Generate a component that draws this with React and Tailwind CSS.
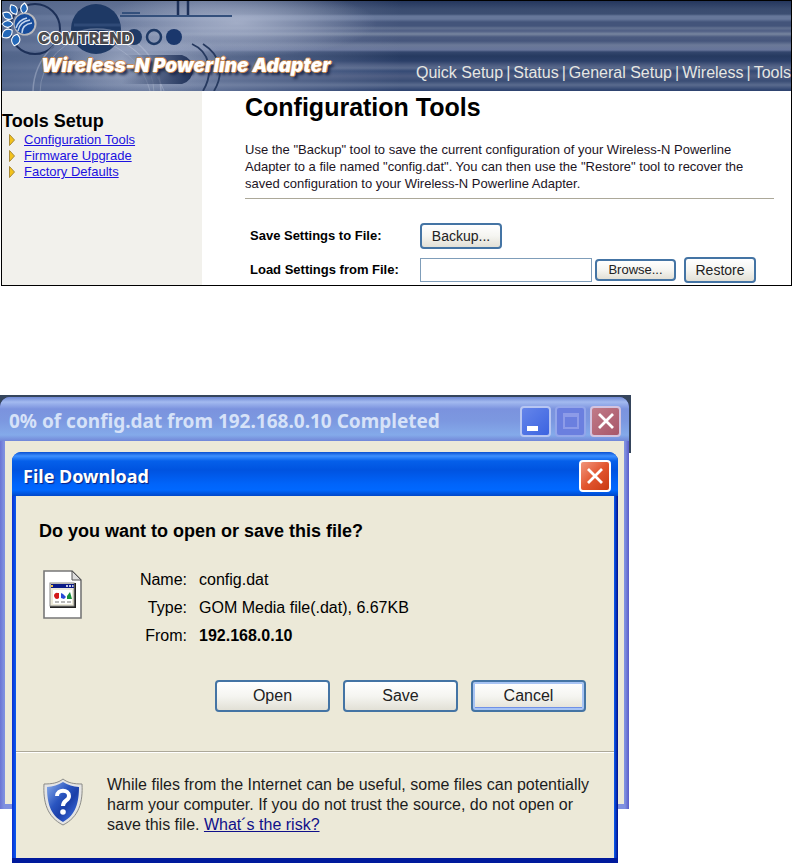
import React from 'react';

const navItems = ['Quick Setup', 'Status', 'General Setup', 'Wireless', 'Tools'];

const sideLinks = ['Configuration Tools', 'Firmware Upgrade', 'Factory Defaults'];

const fileDetails = [
  { label: 'Name:', value: 'config.dat' },
  { label: 'Type:', value: 'GOM Media file(.dat), 6.67KB' },
  { label: 'From:', value: '192.168.0.10', bold: true },
];

const xpButton =
  'rounded-[4px] border-2 border-[#4474a4] bg-linear-to-b from-white via-[#f5f5f1] to-[#e2e0d6] text-[#222]';

const BannerArt = () => (
  <svg className="absolute inset-y-0 left-0 h-[90px] w-[400px]" viewBox="0 0 400 90" aria-hidden="true">
    <defs>
      <linearGradient id="fade" x1="0" x2="1">
        <stop offset="0" stopColor="#5c6f94" stopOpacity="0.8" />
        <stop offset="0.5" stopColor="#8593b3" stopOpacity="0.6" />
        <stop offset="1" stopColor="#8794b4" stopOpacity="0" />
      </linearGradient>
      <linearGradient id="pill" x1="0" x2="1">
        <stop offset="0" stopColor="#1f3158" stopOpacity="0" />
        <stop offset="1" stopColor="#1f3158" />
      </linearGradient>
      <radialGradient id="glow">
        <stop offset="0" stopColor="#c4cce0" stopOpacity="0.65" />
        <stop offset="1" stopColor="#c4cce0" stopOpacity="0" />
      </radialGradient>
    </defs>
    <rect width="400" height="90" fill="url(#fade)" />
    <ellipse cx="235" cy="22" rx="140" ry="34" fill="url(#glow)" />
    <ellipse cx="135" cy="62" rx="90" ry="36" fill="url(#glow)" />
    <circle cx="33" cy="28" r="25" fill="none" stroke="#1d3058" strokeWidth="2" />
    <circle cx="94" cy="28" r="25" fill="#1e3965" />
    <path d="M72 24h46M73 33h43M77 42h34" stroke="#2f4a77" strokeWidth="3" />
    <path d="M118 15H230" stroke="#34507c" strokeWidth="2" />
    <path d="M120 12h18" stroke="#34507c" strokeWidth="2" />
    <path d="M176 0v14M186 0v14" stroke="#1d3058" strokeWidth="2.5" />
    <circle cx="95" cy="92" r="64" fill="none" stroke="#c0c9dc" strokeOpacity="0.4" strokeWidth="1.5" />
    <circle cx="95" cy="92" r="57" fill="none" stroke="#c0c9dc" strokeOpacity="0.3" />
    <path d="M100 40c28 10 42 28 48 50M110 36c32 14 44 34 52 54" fill="none" stroke="#c0c9dc" strokeOpacity="0.35" />
    <path d="M120 54h60a15 15 0 0 1 0 29h-60z" fill="url(#pill)" />
    <path d="M190 43c18 8 22 28 11 47M201 43c19 12 21 30 11 47" fill="none" stroke="#26395f" strokeWidth="1.8" />
    <circle cx="132" cy="36" r="8" fill="#1e3965" />
    <circle cx="152" cy="36" r="7" fill="none" stroke="#1e3965" strokeWidth="2.5" />
    <circle cx="172" cy="36" r="8" fill="#1a376c" />
  </svg>
);

const LogoMark = () => (
  <svg className="h-[42px] w-[36px] shrink-0 overflow-visible" viewBox="0 0 36 42" aria-hidden="true">
    <g fill="#2468b8" stroke="#fff" strokeWidth="1.1" strokeLinejoin="round">
      <path d="M0-6c5 4 4 8 0 11-4-3-5-7 0-11z" transform="translate(22 5) rotate(5)" />
      <path d="M0-6c5 4 4 8 0 11-4-3-5-7 0-11z" transform="translate(12 6) rotate(-30)" />
      <path d="M0-6c5 4 4 8 0 11-4-3-5-7 0-11z" transform="translate(6 12) rotate(-60)" />
      <path d="M0-6c5 4 4 8 0 11-4-3-5-7 0-11z" transform="translate(6 20) rotate(-90)" />
      <path d="M0-7c6 4 5 9 0 12-5-3-6-8 0-12z" transform="translate(6 29) rotate(-125)" />
      <path d="M0-7c6 4 5 9 0 12-5-3-6-8 0-12z" transform="translate(14 35) rotate(-165)" />
    </g>
    <circle cx="23" cy="20" r="11.500" fill="#b9b9bd" />
    <circle cx="22.500" cy="20" r="10" fill="#174c9b" />
    <path d="M14 24c2-6 6-9 11-10M16 27c1-6 5-10 12-11M20 29c0-5 3-9 10-10" fill="none" stroke="#c3d5ee" strokeWidth="1.500" />
  </svg>
);

const ArrowBullet = () => (
  <svg className="h-[12px] w-[6px]" viewBox="0 0 6 12" aria-hidden="true">
    <path d="M.5.5 5.5 6 .5 11.5z" fill="#f3c21a" stroke="#a88a38" />
  </svg>
);

const CrossIcon = () => (
  <svg className="size-5" viewBox="0 0 20 20" aria-hidden="true">
    <path d="M3 3 17 17M17 3 3 17" stroke="#fff" strokeWidth="2.8" />
  </svg>
);

const FileIcon = () => (
  <svg className="h-[49px] w-10" viewBox="0 0 40 49" aria-hidden="true">
    <path d="M1 1h28l9 9v38H1z" fill="#fff" stroke="#777" strokeWidth="1.6" />
    <path d="M29 1v9h9z" fill="#ddd" stroke="#555" />
    <rect x="7" y="13" width="26" height="25" fill="#222" />
    <rect x="7" y="13" width="24" height="23" fill="#ece9d8" stroke="#888" />
    <rect x="8" y="14" width="23" height="4" fill="#0a1a86" />
    <path d="M8 16h2" stroke="#f0c040" strokeWidth="2" />
    <path d="M23 16h2M26 16h2M29 16h1.500" stroke="#fff" strokeWidth="1.500" />
    <rect x="10" y="20" width="19" height="14" fill="#fff" />
    <path d="M15 23a3 3 0 1 0 1 5v-5z" fill="#d31818" />
    <path d="m18 23 2 1 3 3-2 2-3-1z" fill="#2a48d8" />
    <path d="M24 29v-3l3-4 2 7z" fill="#18903c" />
    <path d="M12 32h4M18 32h4M24 32h4" stroke="#777" strokeWidth="1.200" />
  </svg>
);

const ShieldIcon = () => (
  <svg className="h-12 w-10" viewBox="0 0 40 48" aria-hidden="true">
    <defs>
      <linearGradient id="shield" x1="0" y1="0" x2="1" y2="1">
        <stop offset="0" stopColor="#8db0ec" />
        <stop offset="0.4" stopColor="#2a55c0" />
        <stop offset="0.6" stopColor="#1b3fa8" />
        <stop offset="1" stopColor="#4a7ef0" />
      </linearGradient>
    </defs>
    <path d="M20 1c5 4 11 5 19 5 1 18-3 33-19 41C4 39 0 24 1 6c8 0 14-1 19-5z" fill="#e4e4e4" stroke="#8b8b87" />
    <path d="M20 4c5 3 10 4.500 16 5 0 15-3 28-16 35C7 37 4 24 4 9c6-.5 11-2 16-5z" fill="url(#shield)" />
    <path d="M14 18c0-7 12-7 12 0 0 5-6 4-6 10" fill="none" stroke="#fff" strokeWidth="4" />
    <circle cx="20" cy="34" r="2.800" fill="#fff" />
  </svg>
);

const RouterPage = () => (
  <section className="border border-black bg-white">
    <header className="relative h-[90px] bg-[linear-gradient(#24365d_0px,#3a4c70_8px,#3c4e72_13px,#66779a_15px,#66779a_18px,#43547a_21px,#43547a_25px,#61708f_27px,#4f5f85_30px,#77859f_33px,#4b5b80_36px,#46567c_40px,#6b7998_44px,#66749a_49px,#33466d_51px,#263a60_55px,#2b3f68_60px,#4b5b80_64px,#5a6a8c_67px,#354a75_70px,#4c5b80_75px,#3a4d75_80px,#5a6b8e_84px,#2f4470_89px)]">
      <BannerArt />
      <div className="relative flex h-full items-end justify-between">
        <div className="flex h-full flex-col pt-[2px]">
          <div className="flex h-[43px] items-end">
            <LogoMark />
            <span className="font-[Inter] text-[16px] leading-4 font-black text-[#4b4b4f] [text-shadow:1px_0_#fff,-1px_0_#fff,0_1px_#fff,0_-1px_#fff,1px_1px_#fff,-1px_-1px_#fff]">
              COMTREND
            </span>
          </div>
          <p className="mt-2 ml-[39px] font-[Inter] text-[19px] leading-6 font-black whitespace-nowrap text-white italic [text-shadow:1px_0_#c98a52,-1px_0_#c98a52,0_1px_#c98a52,0_-1px_#c98a52,3px_3px_3px_#1b2748]">
            Wireless-N Powerline Adapter
          </p>
        </div>
        <nav className="flex gap-[3px] pb-2 text-[16px] leading-5 whitespace-nowrap text-[#e6e6e2]">
          {navItems.map((item, i) => (
            <React.Fragment key={item}>
              {i > 0 && <span>|</span>}
              <a href="#">{item}</a>
            </React.Fragment>
          ))}
        </nav>
      </div>
    </header>

    <div className="flex">
      <aside className="w-[200px] shrink-0 bg-[#f2f1ec] pt-[19px]">
        <h2 className="text-[18px] leading-[22px] font-bold">Tools Setup</h2>
        <ul className="pl-[7px]">
          {sideLinks.map((link) => (
            <li key={link} className="flex h-4 items-center gap-[9px]">
              <ArrowBullet />
              <a href="#" className="text-[13px] leading-4 text-[#1c12e0] underline">
                {link}
              </a>
            </li>
          ))}
        </ul>
      </aside>

      <main className="flex-1 pr-[17px] pb-[2px] pl-[43px]">
        <h1 className="text-[25px] leading-8 font-bold">Configuration Tools</h1>
        <p className="mt-[18px] text-[13px] leading-[17px] text-[#1c1424]">
          Use the "Backup" tool to save the current configuration of your Wireless-N Powerline
          Adapter to a file named "config.dat". You can then use the "Restore" tool to recover the
          saved configuration to your Wireless-N Powerline Adapter.
        </p>
        <hr className="mt-[6px] border-[#aca899]" />

        <div className="mt-6 grid grid-cols-[170px_1fr] items-center gap-y-2 pl-[5px]">
          <label htmlFor="backup" className="text-[13px] font-bold">Save Settings to File:</label>
          <div>
            <button id="backup" type="button" className={`${xpButton} block h-[26px] w-[82px] text-[14px] leading-4`}>
              Backup...
            </button>
          </div>
          <label htmlFor="settings" className="text-[13px] font-bold">Load Settings from File:</label>
          <div className="flex items-center">
            <input id="settings" type="text" className="h-6 w-[172px] border border-[#7f9db9] bg-white px-1" />
            <button type="button" className={`${xpButton} ml-[3px] h-[22px] w-[81px] text-[13px] leading-4`}>
              Browse...
            </button>
            <button type="button" className={`${xpButton} ml-2 h-[26px] w-[72px] text-[14px] leading-4`}>
              Restore
            </button>
          </div>
        </div>
      </main>
    </div>
  </section>
);

const ProgressWindow = () => (
  <div className="col-start-1 row-start-1 mb-[54px] bg-[linear-gradient(#35455c_58px,transparent_58px)] pt-[2px] pr-[2px]">
    <div className="flex h-full flex-col rounded-t-[10px] bg-[linear-gradient(90deg,#6a74d4,#7f90e0_4px,#7f90e0_calc(100%-4px),#5a5cc8)] px-[5px] pb-[5px]">
      <div className="-mx-[5px] flex h-11 items-center justify-between rounded-t-[10px] bg-[linear-gradient(#7089d4,#a3baf0_5px,#7b93de_12px,#7c98e0_24px,#84aaea_38px,#7287d8)] pt-1 pr-[8px] pl-[9px]">
        <h2 className="font-['Noto_Sans'] text-[19px] leading-6 font-bold whitespace-nowrap text-[#d6e2f8]">
          0% of config.dat from 192.168.0.10 Completed
        </h2>
        <div className="flex gap-[4px]">
          <button type="button" aria-label="Minimize" className="flex size-[31px] items-end rounded-[4px] border-2 border-[#b7c6f2] bg-linear-to-br from-[#6585ea] to-[#3c63e0] pb-[4px] pl-[5px]">
            <span className="h-[5px] w-[11px] bg-white" />
          </button>
          <button type="button" aria-label="Maximize" className="flex size-[31px] items-center justify-center rounded-[4px] border-2 border-[#93a6ea] bg-[#6b7fdf]">
            <span className="h-4 w-4 border-2 border-t-4 border-[#8d9be8]" />
          </button>
          <button type="button" aria-label="Close window" className="flex size-[31px] items-center justify-center rounded-[4px] border-2 border-[#d3c4e0] bg-linear-to-br from-[#c07b88] to-[#a8566a]">
            <CrossIcon />
          </button>
        </div>
      </div>
      <div className="flex-1 bg-[#ece9d8]" />
    </div>
  </div>
);

const DownloadDialog = () => (
  <div
    role="dialog"
    aria-labelledby="dialog-title"
    className="z-10 col-start-1 row-start-1 mt-[57px] mr-[13px] ml-3 rounded-t-[9px] bg-[linear-gradient(90deg,#0a2fd0,#0b5cf0_4px,#0b5cf0_calc(100%-4px),#00108c)] px-1 pb-[5px] shadow-[inset_0_-5px_#001a9c]"
  >
    <div className="-mx-1 flex h-11 items-center justify-between rounded-t-[9px] bg-[linear-gradient(#0a50d0,#3d90ff_4px,#0560ea_9px,#0053e0_18px,#0064fa_32px,#0068ff_38px,#0047c8)] pt-1 pr-[7px] pl-[11px]">
      <h2 id="dialog-title" className="font-['Noto_Sans'] text-[18px] leading-6 font-bold text-white [text-shadow:1px_1px_1px_#0a2080]">
        File Download
      </h2>
      <button type="button" aria-label="Close" className="flex size-8 items-center justify-center rounded-[4px] border-2 border-white bg-linear-to-br from-[#f0957c] via-[#e2552e] to-[#c93a10]">
        <CrossIcon />
      </button>
    </div>

    <div className="bg-[#ece9d8] pb-[23px]">
      <p className="px-[23px] pt-[23px] text-[18px] leading-6 font-bold">Do you want to open or save this file?</p>

      <div className="flex items-end gap-6 px-[27px] pt-[23px]">
        <div className="self-start pt-1">
          <FileIcon />
        </div>
        <dl className="grid grid-cols-[80px_1fr] gap-x-3 text-[16px] leading-[28px]">
          {fileDetails.map(({ label, value, bold }) => (
            <React.Fragment key={label}>
              <dt className="text-right">{label}</dt>
              <dd className={bold ? 'font-bold' : ''}>{value}</dd>
            </React.Fragment>
          ))}
        </dl>
      </div>

      <div className="mt-[30px] flex justify-end gap-[13px] pr-7">
        <button type="button" className={`${xpButton} h-8 w-[115px] text-[16px]`}>Open</button>
        <button type="button" className={`${xpButton} h-8 w-[115px] text-[16px]`}>Save</button>
        <button type="button" className={`${xpButton} h-8 w-[115px] text-[16px] shadow-[inset_0_0_0_2px_#a8c4f4,inset_0_-3px_#6f90e8]`}>
          Cancel
        </button>
      </div>

      <hr className="mt-[39px] border-b border-t-[#aca899] border-b-white" />

      <div className="flex items-start gap-6 pt-[22px] pr-1 pl-[27px]">
        <div className="pt-[3px]">
          <ShieldIcon />
        </div>
        <p className="text-[16px] leading-5 text-[#1c1c1c]">
          While files from the Internet can be useful, some files can potentially{' '}
          <br className="hidden sm:block" />
          harm your computer. If you do not trust the source, do not open or{' '}
          <br className="hidden sm:block" />
          save this file.{' '}
          <a href="#" className="inline-block text-[#10108a] underline">What´s the risk?</a>
        </p>
      </div>
    </div>
  </div>
);

const App = () => (
  <div className="bg-white pl-px font-['Liberation_Sans',sans-serif] text-black">
    <RouterPage />
    <div className="mt-[109px] -ml-px grid max-w-[631px]">
      <ProgressWindow />
      <DownloadDialog />
    </div>
  </div>
);

export default App;
